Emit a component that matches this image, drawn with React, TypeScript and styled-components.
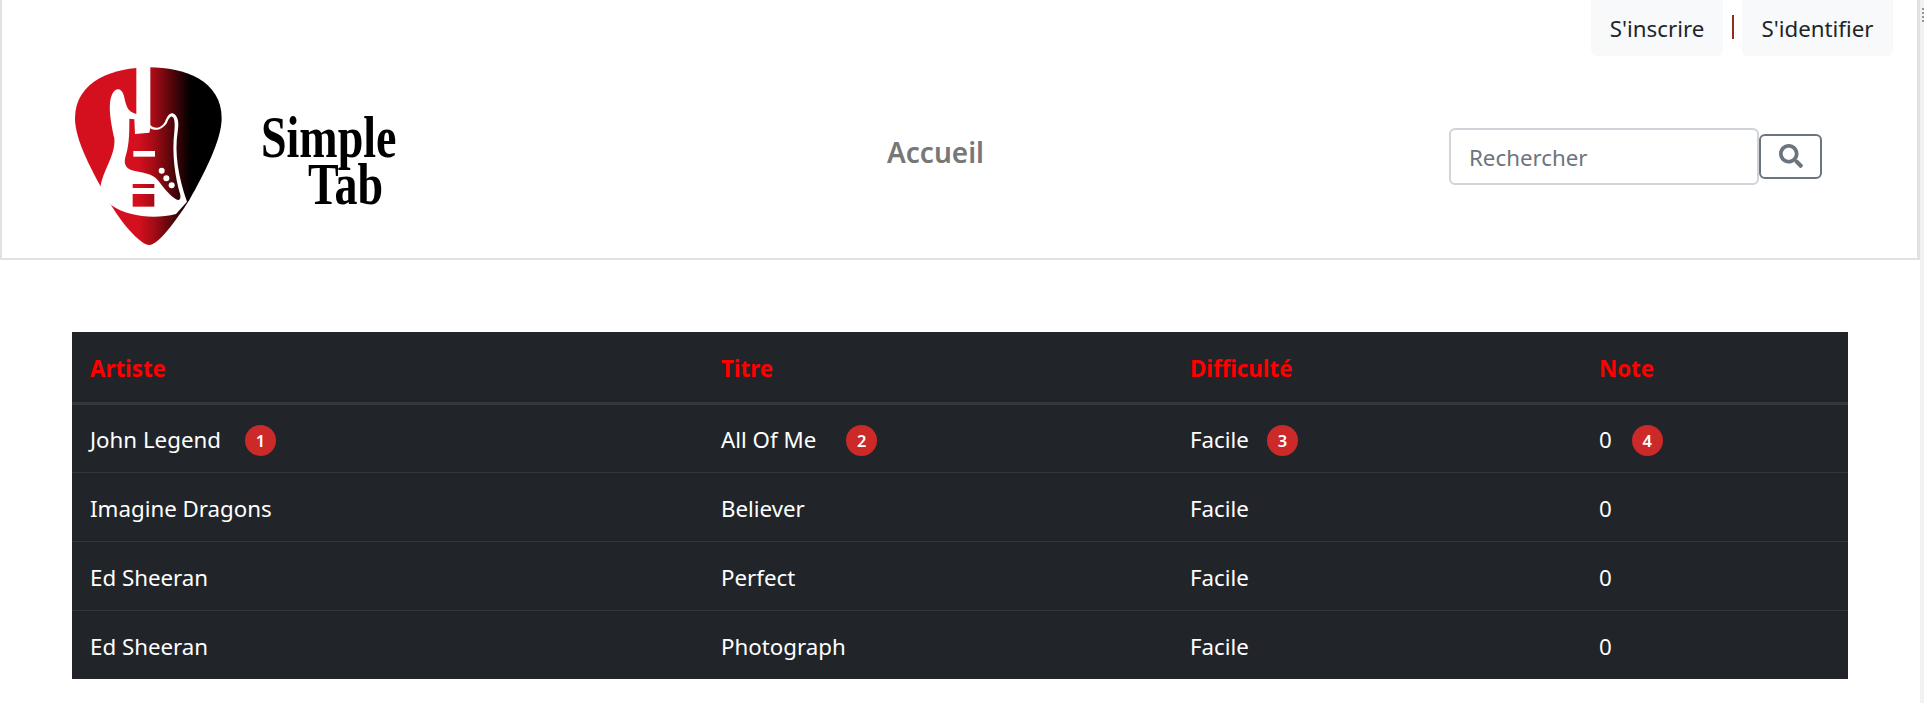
import React from 'react';
import styled, { createGlobalStyle } from 'styled-components';

const GlobalStyle = createGlobalStyle`
  html, body {
    margin: 0;
    padding: 0;
    background: #fff;
  }
  body {
    font-family: 'Noto Sans', 'Open Sans', Arial, sans-serif;
    overflow: hidden;
  }
  * {
    box-sizing: border-box;
  }
`;

const Page = styled.div`
  display: flex;
  width: 1924px;
  height: 703px;
`;

const Main = styled.div`
  width: 1920px;
`;

const ScrollStrip = styled.div`
  width: 4px;
  padding: 8px 0 0 2px;
  background: #f1f1f1;
`;

const ScrollGrip = styled.div`
  width: 2px;
  height: 14px;
  background: repeating-linear-gradient(#8d99a6 0 2px, transparent 2px 4px);
`;

const Navbar = styled.header`
  height: 260px;
  border: solid #dee2e6;
  border-width: 0 3px 2px 2px;
  display: flex;
  flex-direction: column;
`;

const AccountBar = styled.div`
  display: flex;
  justify-content: flex-end;
  align-items: center;
  height: 56px;
  padding-right: 24px;
`;

const AccountButton = styled.a`
  display: flex;
  align-items: center;
  justify-content: center;
  height: 56px;
  width: ${(p: { $w: number }) => p.$w}px;
  background: #f8f9fa;
  border-radius: 0 0 6px 6px;
  color: #212529;
  font-size: 22.3px;
`;

const Separator = styled.span`
  width: 2px;
  height: 24px;
  margin: 0 8px 2px 9px;
  background: #8c2f1e;
`;

const NavRow = styled.div`
  display: flex;
  align-items: flex-start;
  padding-left: 72px;
`;

const LogoLink = styled.div`
  display: flex;
  align-items: flex-start;
  width: 813px;
  padding-top: 4px;
`;

const Wordmark = styled.div`
  margin: 65px 0 0 20px;
  width: 140px;
  color: #000;
  font-family: 'Liberation Serif', 'DejaVu Serif', serif;
  font-weight: 700;
  font-size: 46px;
  line-height: 36px;
  transform: scale(1, 1.3);
`;

const WordmarkLine = styled.span`
  display: block;
  margin-left: ${(p: { $indent: number }) => p.$indent}px;
`;

const NavLink = styled.a`
  width: 562px;
  margin-top: 74px;
  color: #777;
  font-size: 28px;
  font-weight: 600;
  line-height: 44px;
`;

const SearchForm = styled.form`
  display: flex;
  align-items: center;
  margin-top: 72px;
`;

const SearchInput = styled.input`
  width: 310px;
  height: 57px;
  padding: 2px 18px 0;
  border: 2px solid #ced4da;
  border-radius: 6px;
  font-family: inherit;
  font-size: 22.3px;
  background: #fff;
  color: #212529;
  &::placeholder {
    color: #6c757d;
  }
`;

const SearchButton = styled.button`
  display: flex;
  align-items: center;
  justify-content: center;
  width: 63px;
  height: 45px;
  padding: 0;
  border: 2px solid #6c757d;
  border-radius: 6px;
  background: transparent;
  color: #6c757d;
  margin-bottom: 1px;
`;

const Content = styled.main`
  padding: 72px 72px 0;
`;

const Table = styled.table`
  width: 1776px;
  border-collapse: collapse;
  table-layout: fixed;
  background: #212529;
  color: #fff;
  font-size: 22.3px;
`;

const HeadCell = styled.th`
  width: ${(p: { $w: number }) => p.$w}px;
  height: 71px;
  padding: 3px 18px 0;
  text-align: left;
  vertical-align: middle;
  color: #f00;
  font-weight: 700;
  border-bottom: 3px solid #32383e;
`;

const Row = styled.tr`
  border-top: 1px solid #32383e;
  &:first-child {
    border-top: 0;
  }
`;

const Cell = styled.td`
  height: 69px;
  padding: 3px 18px 0;
  vertical-align: middle;
`;

const Badge = styled.span`
  display: inline-flex;
  align-items: center;
  justify-content: center;
  width: 31px;
  height: 31px;
  margin-left: ${(p: { $gap: number }) => p.$gap}px;
  border-radius: 50%;
  background: #cc2929;
  color: #fff;
  font-size: 16.5px;
  font-weight: 600;
  vertical-align: 1px;
`;

const LogoMark = styled.svg`
  display: block;
  flex: none;
  margin-left: -13px;
`;

const Logo = () => (
  <LogoMark width="180" height="190" viewBox="0 0 540 570">
    <defs>
      <linearGradient id="pick" gradientUnits="userSpaceOnUse" x1="232" y1="0" x2="388" y2="0">
        <stop offset="0" stopColor="#d40f1e" />
        <stop offset="0.3" stopColor="#a50b16" />
        <stop offset="1" stopColor="#000" />
      </linearGradient>
    </defs>
    <path
      fill="url(#pick)"
      d="M265 22C160 22 42 62 42 175C42 240 90 330 150 435C190 500 240 555 265 555C290 555 340 490 385 420C430 340 482 240 482 175C482 62 370 22 265 22Z"
    />
    <path
      fill="#fff"
      d="M226 20L268 20L268 195C280 207 300 207 312 185C318 170 325 158 335 160C350 165 355 185 350 215C340 280 352 350 378 425L345 462C280 478 200 470 150 435L118 392C118 340 165 290 160 235C150 190 138 130 155 100C165 82 182 85 188 105C195 130 195 155 226 162Z"
    />
    <path
      fill="url(#pick)"
      d="M205 176L220 178L222 222L265 218L268 205C285 215 305 208 318 188C322 178 328 168 334 170C342 175 342 195 340 215C332 280 342 350 358 405C360 418 354 424 345 418C325 405 310 385 290 360C275 340 240 338 210 330C190 322 188 305 195 285C205 250 205 215 205 176Z"
    />
    <rect x="217" y="273" width="65" height="17" fill="#fff" />
    <circle cx="302" cy="332" r="9" fill="#fff" />
    <circle cx="316" cy="355" r="9" fill="#fff" />
    <circle cx="332" cy="376" r="9" fill="#fff" />
    <rect x="215" y="372" width="65" height="12" fill="url(#pick)" />
    <rect x="215" y="402" width="65" height="38" fill="url(#pick)" />
  </LogoMark>
);

const SearchIcon = () => (
  <svg width="24" height="24" viewBox="0 0 512 512" fill="currentColor">
    <path d="M505 442.7L405.3 343c-4.500-4.500-10.600-7-17-7H372c27.600-35.300 44-79.700 44-128C416 93.100 322.900 0 208 0S0 93.100 0 208s93.100 208 208 208c48.300 0 92.700-16.400 128-44v16.300c0 6.400 2.500 12.500 7 17l99.700 99.700c9.400 9.400 24.600 9.400 33.900 0l28.300-28.300c9.400-9.400 9.400-24.600.1-34zM208 336c-70.700 0-128-57.200-128-128 0-70.700 57.200-128 128-128 70.700 0 128 57.200 128 128 0 70.700-57.200 128-128 128z" />
  </svg>
);

const rows = [
  ['Imagine Dragons', 'Believer', 'Facile', '0'],
  ['Ed Sheeran', 'Perfect', 'Facile', '0'],
  ['Ed Sheeran', 'Photograph', 'Facile', '0'],
];

const App = (): JSX.Element => {
  return (
    <>
      <GlobalStyle />
      <Page>
        <Main>
          <Navbar>
            <AccountBar>
              <AccountButton $w={132}>S'inscrire</AccountButton>
              <Separator />
              <AccountButton $w={151}>S'identifier</AccountButton>
            </AccountBar>
            <NavRow>
              <LogoLink>
                <Logo />
                <Wordmark>
                  <WordmarkLine $indent={0}>Simple</WordmarkLine>
                  <WordmarkLine $indent={47}>Tab</WordmarkLine>
                </Wordmark>
              </LogoLink>
              <NavLink>Accueil</NavLink>
              <SearchForm>
                <SearchInput placeholder="Rechercher" />
                <SearchButton type="button">
                  <SearchIcon />
                </SearchButton>
              </SearchForm>
            </NavRow>
          </Navbar>
          <Content>
            <Table>
              <thead>
                <tr>
                  <HeadCell $w={631}>Artiste</HeadCell>
                  <HeadCell $w={469}>Titre</HeadCell>
                  <HeadCell $w={409}>Difficulté</HeadCell>
                  <HeadCell $w={267}>Note</HeadCell>
                </tr>
              </thead>
              <tbody>
                <Row>
                  <Cell>
                    John Legend<Badge $gap={24}>1</Badge>
                  </Cell>
                  <Cell>
                    All Of Me<Badge $gap={30}>2</Badge>
                  </Cell>
                  <Cell>
                    Facile<Badge $gap={18}>3</Badge>
                  </Cell>
                  <Cell>
                    0<Badge $gap={20}>4</Badge>
                  </Cell>
                </Row>
                {rows.map((r, i) => (
                  <Row key={i}>
                    {r.map((c, j) => (
                      <Cell key={j}>{c}</Cell>
                    ))}
                  </Row>
                ))}
              </tbody>
            </Table>
          </Content>
        </Main>
        <ScrollStrip>
          <ScrollGrip />
        </ScrollStrip>
      </Page>
    </>
  );
};

export default App;
